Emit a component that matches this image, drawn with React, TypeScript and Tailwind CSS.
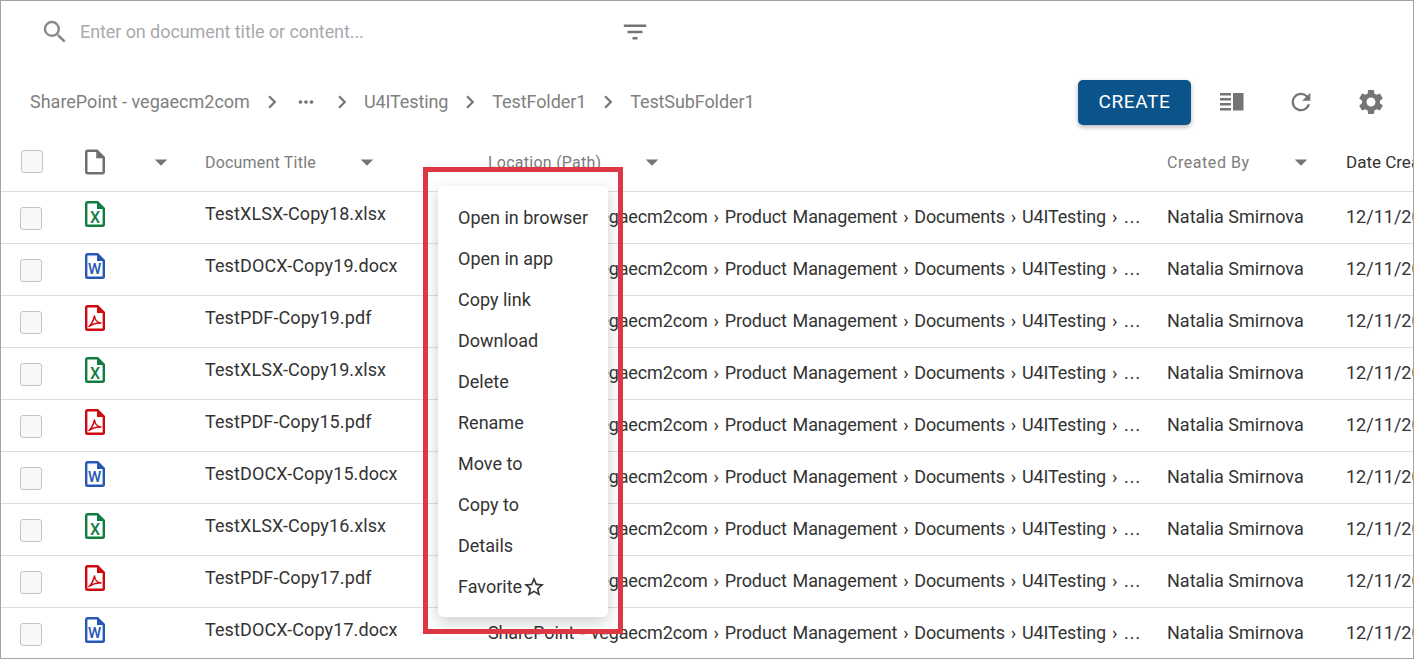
import {
  MdArrowDropDown,
  MdChevronRight,
  MdFilterList,
  MdMoreHoriz,
  MdOutlineInsertDriveFile,
  MdRefresh,
  MdSearch,
  MdSettings,
  MdStarBorder,
} from 'react-icons/md';

type Kind = 'xlsx' | 'docx' | 'pdf';

const rows: { kind: Kind; title: string }[] = [
  { kind: 'xlsx', title: 'TestXLSX-Copy18.xlsx' },
  { kind: 'docx', title: 'TestDOCX-Copy19.docx' },
  { kind: 'pdf', title: 'TestPDF-Copy19.pdf' },
  { kind: 'xlsx', title: 'TestXLSX-Copy19.xlsx' },
  { kind: 'pdf', title: 'TestPDF-Copy15.pdf' },
  { kind: 'docx', title: 'TestDOCX-Copy15.docx' },
  { kind: 'xlsx', title: 'TestXLSX-Copy16.xlsx' },
  { kind: 'pdf', title: 'TestPDF-Copy17.pdf' },
  { kind: 'docx', title: 'TestDOCX-Copy17.docx' },
];

const menuItems = ['Open in browser', 'Open in app', 'Copy link', 'Download', 'Delete', 'Rename', 'Move to', 'Copy to', 'Details'];

const crumbs = ['U4ITesting', 'TestFolder1', 'TestSubFolder1'];

const colors: Record<Kind, string> = { xlsx: '#107c41', docx: '#2557b5', pdf: '#d0080f' };

function FileIcon({ kind }: { kind: Kind }) {
  const color = colors[kind];
  return (
    <svg width="20" height="26" viewBox="0 0 20 26" fill="none">
      <path d="M1.200 2.500A1.300 1.300 0 0 1 2.500 1.200H12.500L18.800 7.500V23.500A1.300 1.300 0 0 1 17.500 24.800H2.500A1.300 1.300 0 0 1 1.200 23.500Z" stroke={color} strokeWidth="2.400" />
      <path d="M12 1V8H19Z" fill={color} />
      {kind === 'xlsx' && (
        <text x="10" y="22" textAnchor="middle" fontSize="16" fontWeight="500" fontFamily="Roboto, sans-serif" fill={color}>X</text>
      )}
      {kind === 'docx' && (
        <text x="9.500" y="21" textAnchor="middle" fontSize="15" fontWeight="500" fontFamily="Roboto, sans-serif" fill={color}>W</text>
      )}
      {kind === 'pdf' && (
        <path d="M4 21.500C6 20 8.500 15 9.500 11C10 15 12.500 17.500 16 18C12 17.500 7.500 19 4 21.500Z" stroke={color} strokeWidth="1.500" strokeLinejoin="round" />
      )}
    </svg>
  );
}

function Checkbox() {
  return <div className="h-[23px] w-[22px] rounded-[3px] border border-[#c4c4c4] bg-[#f8f8f8]" />;
}

function HeaderCell({ label, width, labelClass }: { label: string; width: string; labelClass: string }) {
  return (
    <div className={`flex shrink-0 items-center ${width}`}>
      <span className={`mt-[2px] text-[16px] text-[#7c7c7c] ${labelClass}`}>{label}</span>
      <MdArrowDropDown size={30} className="text-[#757575]" />
    </div>
  );
}

export default function App() {
  return (
    <div className="relative h-[659px] w-[1414px] overflow-hidden border border-[#a3a3a3] bg-white font-['Roboto',sans-serif] text-[#333]">
      <div className="flex h-[62px] items-center pl-[39px]">
        <MdSearch size={30} className="text-[#8a8a8a]" />
        <span className="ml-[10px] w-[540px] pb-[2px] text-[18px] tracking-[-0.08px] text-[#a9a9ad]">Enter on document title or content...</span>
        <MdFilterList size={30} className="text-[#757575]" />
      </div>

      <div className="flex h-[78px] items-center pl-[29px] text-[18px] text-[#808080]">
        <span className="pb-[2px]">SharePoint - vegaecm2com</span>
        <MdChevronRight size={26} className="ml-[9px] text-[#757575]" />
        <MdMoreHoriz size={22} className="ml-[10px] text-[#757575]" />
        <MdChevronRight size={26} className="ml-[12px] text-[#757575]" />
        {crumbs.map((crumb, i) => (
          <div key={crumb} className="flex items-center">
            <span className="ml-[9px] pb-[2px] tracking-[-0.1px]">{crumb}</span>
            {i < crumbs.length - 1 && <MdChevronRight size={26} className="ml-[9px] text-[#757575]" />}
          </div>
        ))}
        <div className="ml-auto flex items-center pr-[27px]">
          <button className="h-[45px] w-[113px] rounded-[5px] bg-[#0a548b] text-[19px] tracking-[0.6px] text-white shadow-[0_2px_5px_rgba(0,0,0,0.3)]">CREATE</button>
          <svg width="24" height="18" viewBox="0 0 24 18" className="ml-[29px]" fill="#757575">
            <rect x="0" y="0" width="11" height="2.500" />
            <rect x="0" y="5" width="11" height="2.500" />
            <rect x="0" y="10" width="11" height="2.500" />
            <rect x="0" y="15" width="11" height="2.500" />
            <rect x="13" y="0" width="10.500" height="17.500" />
          </svg>
          <MdRefresh size={28} className="ml-[43px] text-[#757575]" />
          <MdSettings size={30} className="ml-[41px] text-[#757575]" />
        </div>
      </div>

      <div className="flex h-[51px] items-center border-b border-[#dedede] pb-[9px] pl-[20px]">
        <div className="w-[64px] shrink-0">
          <Checkbox />
        </div>
        <div className="flex w-[120px] shrink-0 items-center">
          <MdOutlineInsertDriveFile size={30} className="ml-[-5px] text-[#6f6f6f]" />
          <MdArrowDropDown size={30} className="ml-[36px] text-[#757575]" />
        </div>
        <HeaderCell label="Document Title" width="w-[283px]" labelClass="w-[147px] tracking-[0.2px]" />
        <HeaderCell label="Location (Path)" width="w-[679px]" labelClass="w-[149px] tracking-[0.25px]" />
        <HeaderCell label="Created By" width="w-[179px]" labelClass="w-[119px] tracking-[0.55px]" />
        <span className="mt-[2px] whitespace-nowrap text-[17px] text-[#333]">Date Created</span>
      </div>

      {rows.map((row) => (
        <div key={row.title} className="flex h-[52px] shrink-0 border-b border-[#dedede] pl-[19px] text-[18px]">
          <div className="w-[65px] shrink-0 pt-[15px]">
            <Checkbox />
          </div>
          <div className="w-[120px] shrink-0 pt-[9px]">
            <FileIcon kind={row.kind} />
          </div>
          <div className="w-[283px] shrink-0 pt-[10px] leading-[24px] tracking-[0.1px]">{row.title}</div>
          <div className="w-[679px] shrink-0 whitespace-nowrap pt-[13px] leading-[24px] tracking-[-0.13px] [word-spacing:1.5px]">
            SharePoint - vegaecm2com › Product Management › Documents › U4ITesting › <span className="font-['Liberation_Sans',sans-serif]">…</span>
          </div>
          <div className="w-[179px] shrink-0 pt-[13px] leading-[24px]">Natalia Smirnova</div>
          <div className="whitespace-nowrap pt-[13px] leading-[24px]">12/11/2020</div>
        </div>
      ))}

      <div className="absolute left-[437px] top-[185px] flex h-[431px] w-[170px] flex-col rounded-[5px] bg-white pt-[11px] pl-[20px] text-[18px] shadow-[0_5px_15px_rgba(0,0,0,0.2)]">
        {menuItems.map((item) => (
          <div key={item} className="flex h-[41px] shrink-0 items-center">{item}</div>
        ))}
        <div className="flex h-[41px] shrink-0 items-center">
          Favorite
          <MdStarBorder size={24} />
        </div>
      </div>
      <div className="absolute left-[422px] top-[166px] h-[467px] w-[200px] border-[5px] border-[#dc3743]" />
    </div>
  );
}
